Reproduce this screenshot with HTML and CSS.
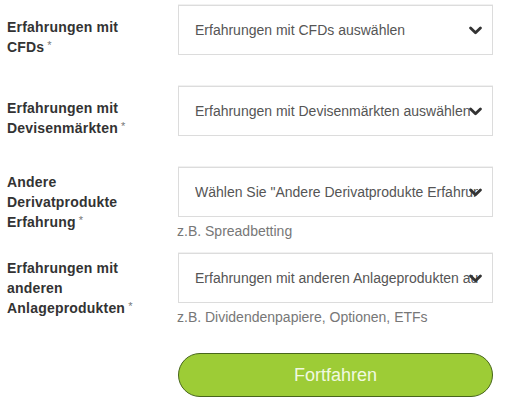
FILE: index.html
```html
<!DOCTYPE html>
<html lang="de">
<head>
<meta charset="utf-8">
<title>Erfahrungen</title>
<link rel="stylesheet" href="styles.css">
</head>
<body>
<form class="form">
  <div class="field">
    <label class="field-label">Erfahrungen mit CFDs<span class="req">*</span></label>
    <div class="field-control">
      <div class="select">
        <span class="select-text">Erfahrungen mit CFDs auswählen</span>
        <svg class="chevron" viewBox="0 0 14 9" width="13" height="9"><polyline points="1.7,1.7 7,7 12.3,1.7" /></svg>
      </div>
    </div>
  </div>
  <div class="field">
    <label class="field-label">Erfahrungen mit Devisenmärkten<span class="req">*</span></label>
    <div class="field-control">
      <div class="select">
        <span class="select-text">Erfahrungen mit Devisenmärkten auswählen</span>
        <svg class="chevron" viewBox="0 0 14 9" width="13" height="9"><polyline points="1.7,1.7 7,7 12.3,1.7" /></svg>
      </div>
    </div>
  </div>
  <div class="field field-hinted">
    <label class="field-label field-label-tall">Andere Derivatprodukte Erfahrung<span class="req">*</span></label>
    <div class="field-control">
      <div class="select">
        <span class="select-text">Wählen Sie "Andere Derivatprodukte Erfahrung" aus</span>
        <svg class="chevron" viewBox="0 0 14 9" width="13" height="9"><polyline points="1.7,1.7 7,7 12.3,1.7" /></svg>
      </div>
      <div class="hint">z.B. Spreadbetting</div>
    </div>
  </div>
  <div class="field field-hinted">
    <label class="field-label field-label-tall">Erfahrungen mit anderen Anlageprodukten<span class="req">*</span></label>
    <div class="field-control">
      <div class="select">
        <span class="select-text">Erfahrungen mit anderen Anlageprodukten auswählen</span>
        <svg class="chevron" viewBox="0 0 14 9" width="13" height="9"><polyline points="1.7,1.7 7,7 12.3,1.7" /></svg>
      </div>
      <div class="hint">z.B. Dividendenpapiere, Optionen, ETFs</div>
    </div>
  </div>
  <div class="field field-actions">
    <div></div>
    <div class="field-control">
      <button type="button" class="btn-primary">Fortfahren</button>
    </div>
  </div>
</form>
</body>
</html>
```
FILE: styles.css
```css
html, body {
  margin: 0;
  padding: 0;
  background: #ffffff;
}

body {
  font-family: "Liberation Sans", Arial, sans-serif;
  width: 510px;
}

.form {
  padding: 5px 0 0 7px;
}

.field {
  display: grid;
  grid-template-columns: 150px 315px;
  column-gap: 21px;
  margin-bottom: 29px;
}

.field-hinted {
  margin-bottom: 13px;
}

.field-actions {
  margin-top: 27px;
  margin-bottom: 0;
}

.field-label {
  width: 140px;
  padding-top: 12px;
  font-size: 14px;
  font-weight: bold;
  line-height: 20px;
  letter-spacing: 0.2px;
  color: #333333;
}

.field-label-tall {
  padding-top: 5px;
}

.req {
  margin-left: 3px;
  font-size: 11px;
  line-height: 0;
  font-weight: normal;
  color: #777777;
  vertical-align: 3px;
  letter-spacing: 0;
}

.select {
  position: relative;
  box-sizing: border-box;
  height: 50px;
  display: flex;
  align-items: center;
  padding: 0 14px 0 16px;
  border: 1px solid #dcdcdc;
  box-shadow: 0 -1px 0 #f1f1f1;
  background: #ffffff;
  overflow: hidden;
}

.select-text {
  white-space: nowrap;
  overflow: hidden;
  font-size: 14px;
  color: #555555;
}

.chevron {
  position: absolute;
  right: 10px;
  top: 50%;
  margin-top: -4px;
}

.chevron polyline {
  fill: none;
  stroke: #333333;
  stroke-width: 3;
  stroke-linecap: round;
  stroke-linejoin: round;
}

.hint {
  margin-top: 5px;
  margin-left: -1px;
  font-size: 14px;
  line-height: 18px;
  color: #777777;
}

.btn-primary {
  display: block;
  box-sizing: border-box;
  width: 315px;
  height: 44px;
  border: 1.5px solid #47661b;
  border-radius: 22px;
  background: #9dcc36;
  color: #f1f9e0;
  font-family: "Liberation Sans", Arial, sans-serif;
  font-size: 18px;
  padding: 0;
}
```
